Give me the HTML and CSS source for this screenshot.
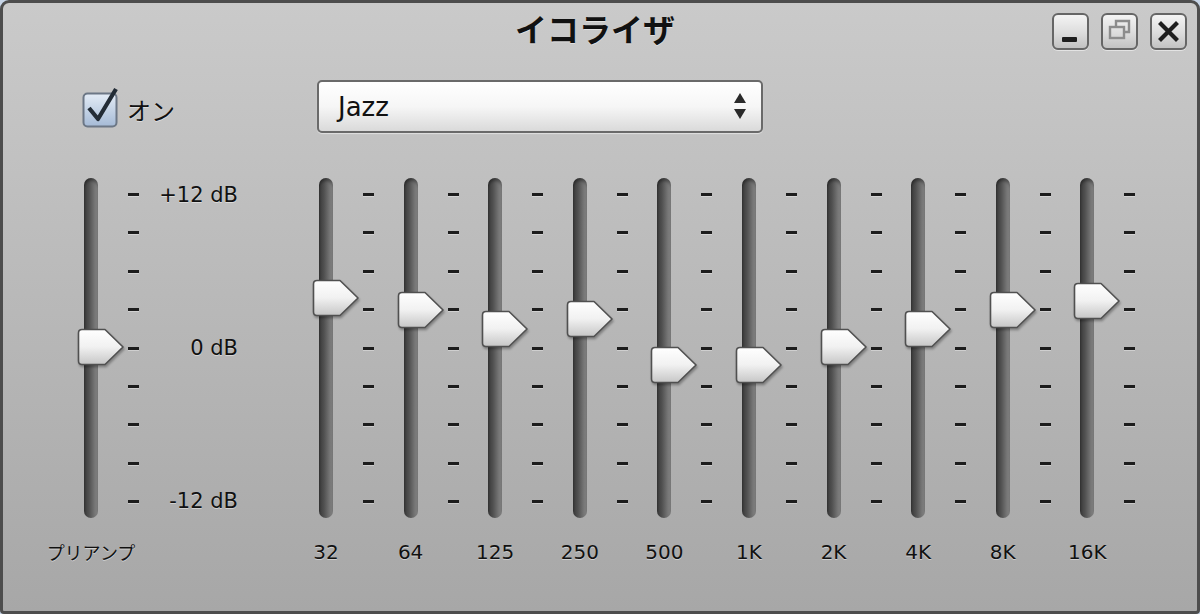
FILE: index.html
```html
<!DOCTYPE html>
<html lang="ja">
  <head>
    <meta charset="UTF-8" />
    <meta name="viewport" content="width=device-width, initial-scale=1.0" />
    <title>イコライザ</title>
    <link rel="stylesheet" href="styles.css">
  </head>
  <body>
    <!-- shared slider knob -->
    <svg class="defs" aria-hidden="true">
      <defs>
        <linearGradient id="knob-fill" x1="0" y1="0" x2="0" y2="1">
          <stop offset="0" stop-color="#ffffff" />
          <stop offset="0.5" stop-color="#f1f1f1" />
          <stop offset="1" stop-color="#c6c6c6" />
        </linearGradient>
        <symbol id="knob" viewBox="0 0 48 38">
          <path d="M5 1.5 H28 L46 19 L28 36.5 H5 Q1.5 36.5 1.5 33 V5 Q1.5 1.5 5 1.5 Z"
                fill="url(#knob-fill)" stroke="#505050" stroke-width="1.6" stroke-linejoin="round" />
        </symbol>
      </defs>
    </svg>

    <div class="window">
      <header class="titlebar">
        <h1 class="title">イコライザ</h1>
        <div class="win-buttons">
          <button class="win-btn" aria-label="最小化">
            <svg viewBox="0 0 33 33"><rect x="8" y="22" width="15" height="5" rx="1" fill="#1e1e1e" /></svg>
          </button>
          <button class="win-btn" aria-label="元のサイズに戻す">
            <svg viewBox="0 0 33 33" fill="none" stroke="#8c8c8c" stroke-width="2.4">
              <path d="M13 11 V6 H26 V17 H22" />
              <rect x="7" y="12" width="14" height="11" />
            </svg>
          </button>
          <button class="win-btn" aria-label="閉じる">
            <svg viewBox="0 0 33 33" stroke="#1e1e1e" stroke-width="4.2" stroke-linecap="square">
              <path d="M9 9 L24 24 M24 9 L9 24" />
            </svg>
          </button>
        </div>
      </header>

      <div class="controls">
        <label class="toggle">
          <svg class="checkbox" viewBox="0 0 36 36">
            <defs>
              <linearGradient id="box-fill" x1="0" y1="0" x2="0" y2="1">
                <stop offset="0" stop-color="#e4ecf6" />
                <stop offset="1" stop-color="#a5bad6" />
              </linearGradient>
            </defs>
            <rect x="1.5" y="1.5" width="33" height="33" rx="4" fill="url(#box-fill)" stroke="#6c7786" stroke-width="2" />
            <path d="M7 16 L16 27 L34 -3" fill="none" stroke="#232c36" stroke-width="4.2" stroke-linejoin="round" />
          </svg>
          <span>オン</span>
        </label>
        <div class="preset">
          <span>Jazz</span>
          <svg class="spinner" viewBox="0 0 14 27" fill="#2a2a2a">
            <path d="M7 0 L13 10 H1 Z" />
            <path d="M1 16 H13 L7 26 Z" />
          </svg>
        </div>
      </div>

      <div class="eq">
        <div class="preamp">
          <div class="slider">
            <div class="track"></div>
            <svg class="knob" style="--db: 0"><use href="#knob" /></svg>
            <div class="ticks"><i></i><i></i><i></i><i></i><i></i><i></i><i></i><i></i><i></i></div>
            <div class="scale"><span>+12 dB</span><span>0 dB</span><span>-12 dB</span></div>
          </div>
          <div class="band-label"><span class="jp">プリアンプ</span></div>
        </div>

        <div class="bands">
          <div class="band">
            <div class="slider"><div class="track"></div><svg class="knob" style="--db: 4"><use href="#knob" /></svg>
              <div class="ticks"><i></i><i></i><i></i><i></i><i></i><i></i><i></i><i></i><i></i></div></div>
            <div class="band-label"><span>32</span></div>
          </div>
          <div class="band">
            <div class="slider"><div class="track"></div><svg class="knob" style="--db: 3"><use href="#knob" /></svg>
              <div class="ticks"><i></i><i></i><i></i><i></i><i></i><i></i><i></i><i></i><i></i></div></div>
            <div class="band-label"><span>64</span></div>
          </div>
          <div class="band">
            <div class="slider"><div class="track"></div><svg class="knob" style="--db: 1.5"><use href="#knob" /></svg>
              <div class="ticks"><i></i><i></i><i></i><i></i><i></i><i></i><i></i><i></i><i></i></div></div>
            <div class="band-label"><span>125</span></div>
          </div>
          <div class="band">
            <div class="slider"><div class="track"></div><svg class="knob" style="--db: 2.25"><use href="#knob" /></svg>
              <div class="ticks"><i></i><i></i><i></i><i></i><i></i><i></i><i></i><i></i><i></i></div></div>
            <div class="band-label"><span>250</span></div>
          </div>
          <div class="band">
            <div class="slider"><div class="track"></div><svg class="knob" style="--db: -1.5"><use href="#knob" /></svg>
              <div class="ticks"><i></i><i></i><i></i><i></i><i></i><i></i><i></i><i></i><i></i></div></div>
            <div class="band-label"><span>500</span></div>
          </div>
          <div class="band">
            <div class="slider"><div class="track"></div><svg class="knob" style="--db: -1.5"><use href="#knob" /></svg>
              <div class="ticks"><i></i><i></i><i></i><i></i><i></i><i></i><i></i><i></i><i></i></div></div>
            <div class="band-label"><span>1K</span></div>
          </div>
          <div class="band">
            <div class="slider"><div class="track"></div><svg class="knob" style="--db: 0"><use href="#knob" /></svg>
              <div class="ticks"><i></i><i></i><i></i><i></i><i></i><i></i><i></i><i></i><i></i></div></div>
            <div class="band-label"><span>2K</span></div>
          </div>
          <div class="band">
            <div class="slider"><div class="track"></div><svg class="knob" style="--db: 1.5"><use href="#knob" /></svg>
              <div class="ticks"><i></i><i></i><i></i><i></i><i></i><i></i><i></i><i></i><i></i></div></div>
            <div class="band-label"><span>4K</span></div>
          </div>
          <div class="band">
            <div class="slider"><div class="track"></div><svg class="knob" style="--db: 3"><use href="#knob" /></svg>
              <div class="ticks"><i></i><i></i><i></i><i></i><i></i><i></i><i></i><i></i><i></i></div></div>
            <div class="band-label"><span>8K</span></div>
          </div>
          <div class="band">
            <div class="slider"><div class="track"></div><svg class="knob" style="--db: 3.75"><use href="#knob" /></svg>
              <div class="ticks"><i></i><i></i><i></i><i></i><i></i><i></i><i></i><i></i><i></i></div></div>
            <div class="band-label"><span>16K</span></div>
          </div>
        </div>
      </div>
    </div>
  </body>
</html>
```

FILE: styles.css
```css
* {
  box-sizing: border-box;
}

body {
  margin: 0;
  background: #c7d5e7;
  overflow: hidden;
}

.defs {
  position: absolute;
  width: 0;
  height: 0;
}

.window {
  width: 1200px;
  height: 614px;
  border: 3px solid #4d4d4d;
  border-radius: 9px 9px 4px 4px;
  background: linear-gradient(180deg, #cacaca 0%, #bababa 45%, #a7a7a7 100%);
  color: #111;
  font-family: "DejaVu Sans", "Noto Sans CJK JP", sans-serif;
  text-shadow: 0 1px 0 rgba(255, 255, 255, 0.45);
}

/* title bar */
.titlebar {
  display: grid;
  grid-template-columns: 1fr auto 1fr;
  height: 60px;
  padding: 10px 10px 0;
}

.title {
  grid-column: 2;
  margin: -10px 10px 0 0;
  font-family: "Noto Sans CJK JP", sans-serif;
  font-size: 32px;
  font-weight: 700;
  line-height: 50px;
}

.win-buttons {
  grid-column: 3;
  justify-self: end;
  display: flex;
  gap: 12px;
  align-items: flex-start;
}

.win-btn {
  width: 37px;
  height: 37px;
  padding: 0;
  border: 2px solid #666;
  border-radius: 6px;
  background: linear-gradient(180deg, #f4f4f4 0%, #dcdcdc 55%, #c2c2c2 100%);
  box-shadow: 0 1px 0 rgba(255, 255, 255, 0.5);
}

.win-btn svg {
  display: block;
  width: 33px;
  height: 33px;
}

/* on switch + preset menu */
.controls {
  display: flex;
  align-items: center;
  margin-top: 17px;
  padding-left: 79px;
}

.toggle {
  display: flex;
  align-items: center;
  width: 235px;
  margin-top: 6px;
  font-family: "Noto Sans CJK JP", sans-serif;
  font-size: 24px;
}

.checkbox {
  width: 36px;
  height: 36px;
  overflow: visible;
  margin-right: 9px;
}

.preset {
  display: flex;
  align-items: center;
  justify-content: space-between;
  width: 446px;
  height: 53px;
  padding: 0 14px 0 19px;
  border: 2px solid #6a6a6a;
  border-radius: 5px;
  background: linear-gradient(180deg, #ffffff 0%, #f6f6f6 50%, #dadada 100%);
  box-shadow: 0 1px 1px rgba(255, 255, 255, 0.5);
  font-size: 26px;
  text-shadow: none;
}

.spinner {
  width: 14px;
  height: 27px;
}

/* sliders */
.eq {
  display: flex;
  margin-top: 45px;
  padding-left: 81px;
}

.preamp {
  width: 235px;
}

.bands {
  display: grid;
  grid-template-columns: repeat(10, 84.6px);
}

.slider {
  position: relative;
  display: flex;
  height: 340px;
}

.track {
  width: 14px;
  border-radius: 7px;
  background: linear-gradient(90deg, #3a3a3a 0%, #505050 35%, #747474 75%, #8c8c8c 100%);
  box-shadow: inset 0 3px 3px rgba(0, 0, 0, 0.35);
}

.knob {
  position: absolute;
  left: -7px;
  top: calc(150px - var(--db) * 12.3px);
  width: 48px;
  height: 38px;
  filter: drop-shadow(1px 2px 1px rgba(0, 0, 0, 0.3));
}

.ticks {
  display: flex;
  flex-direction: column;
  justify-content: space-between;
  width: 11px;
  margin-left: 30px;
  padding: 15px 0;
}

.ticks i {
  display: block;
  height: 3px;
  background: #1c1c1c;
  box-shadow: 0 1px 0 rgba(255, 255, 255, 0.35);
}

.scale {
  display: flex;
  flex-direction: column;
  justify-content: space-between;
  align-items: flex-end;
  width: 99px;
  padding: 5px 0;
  font-size: 21px;
  line-height: 24px;
  white-space: nowrap;
}

.band-label {
  display: flex;
  justify-content: center;
  width: 14px;
  margin-top: 22px;
  font-size: 20px;
  line-height: 24px;
  white-space: nowrap;
}

.band-label .jp {
  font-family: "Noto Sans CJK JP", sans-serif;
  font-size: 18px;
}
```
